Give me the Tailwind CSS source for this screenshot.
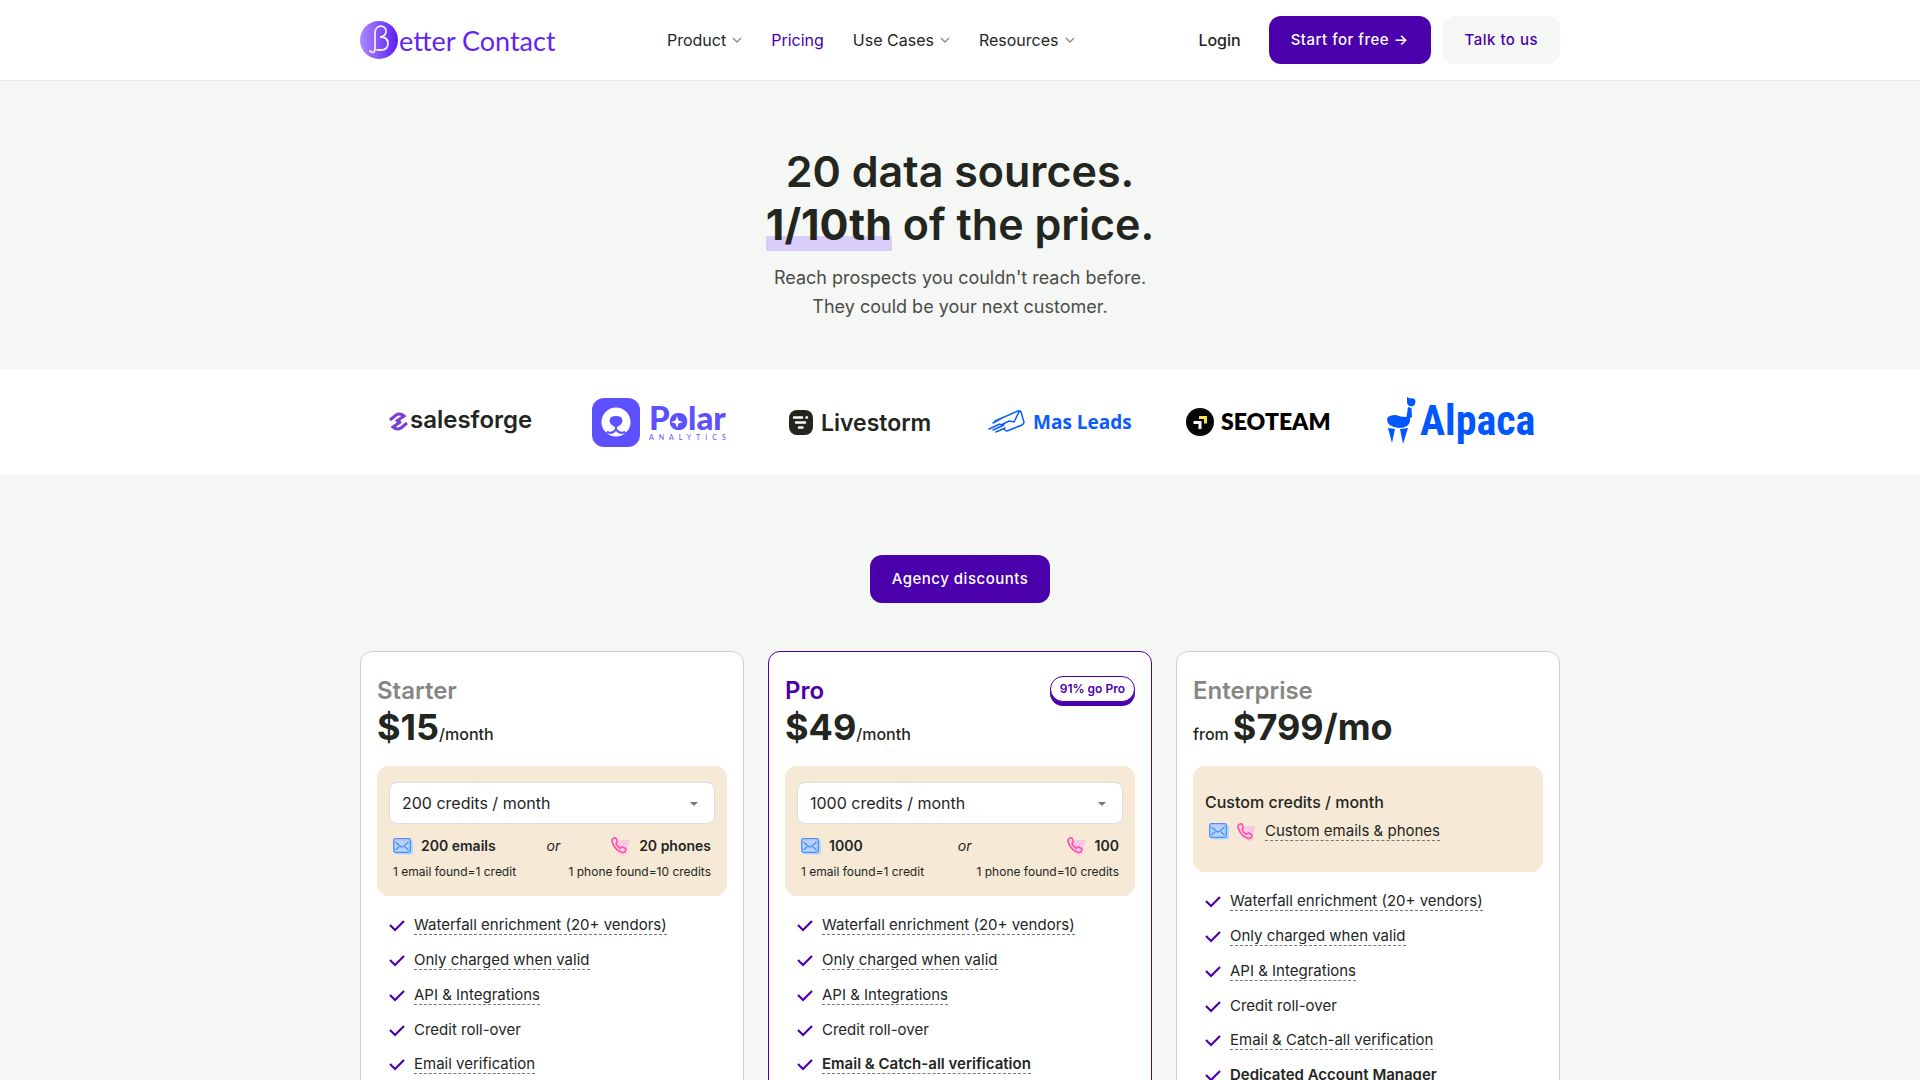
<!DOCTYPE html>
<html lang="en">
<head>
  <meta charset="UTF-8">
  <meta name="viewport" content="width=device-width, initial-scale=1.0">
  <title>Pricing | Better Contact</title>
  <script src="https://cdn.jsdelivr.net/npm/@tailwindcss/browser@4"></script>
</head>
<body class="bg-[#f5f7f4] font-['Inter',sans-serif] text-base text-[#22261f] antialiased">
  <!-- Shared icons -->
  <svg class="hidden" aria-hidden="true">
    <symbol id="chevron" viewBox="0 0 10 6">
      <path d="M1 1l4 4 4-4" fill="none" stroke="#8b8d89" stroke-width="1.4"/>
    </symbol>
    <symbol id="check" viewBox="0 0 16 12">
      <path d="M1 5l5 5 9-9" fill="none" stroke="#4a00ab" stroke-width="2.2"/>
    </symbol>
    <symbol id="mail" viewBox="0 0 20 17">
      <rect x="2" y="2" width="18" height="14.5" rx="2" fill="#b3d4fb"/>
      <rect x=".7" y=".7" width="16.6" height="13.6" rx="1.5" fill="#b3d4fb" stroke="#4e8cf7" stroke-width="1.3"/>
      <path d="M2.5 2.2h13" stroke="#d5b8f0" stroke-width="1"/>
      <path d="M2.5 4l5.2 4.4q1.3 1 2.6 0L15.5 4M2.5 12l3.7-3.3M15.5 12l-3.7-3.3" fill="none" stroke="#4e8cf7" stroke-width="1.3"/>
    </symbol>
    <symbol id="phone" viewBox="0 0 20 18">
      <path d="M8 3l10 0v4l-3 5 2 3-2 3h-4l-6-4z" fill="#f9c6e3"/>
      <path d="M2 1.500l1.500-.7q1.300-.2 1.800 1l1 2.400q.3 1-.4 1.700l-.9.900q1.300 3.100 4.300 4.400l1.100-.9q.8-.6 1.700-.1l2.200 1.300q1.100.8.4 1.900l-1.200 1.500q-.8.800-2.200.500Q3.300 13 1 4.300.700 2.300 2 1.500z" fill="#f9d3e3" stroke="#ff4fab" stroke-width="1.6"/>
    </symbol>
  </svg>

  <!-- Header -->
  <header class="border-b border-[#e9ebe8] bg-white">
    <div class="mx-auto flex h-20 max-w-[1200px] items-center">
      <a href="#" aria-label="Better Contact home">
        <svg class="h-10 w-[195px]" viewBox="0 0 195 40">
          <defs>
            <linearGradient id="brand">
              <stop offset="0" stop-color="#ab8cff"/>
              <stop offset="1" stop-color="#5c1cf5"/>
            </linearGradient>
          </defs>
          <circle cx="19" cy="20" r="19" fill="url(#brand)"/>
          <path d="M10 31q5 4 5-3V13c0-9 12-9 11-1q-1 5-6 5 8 0 8 6 0 7-7 7h-4M26 19l2 3" fill="none" stroke="#f3ecff" stroke-width="1.8" stroke-linecap="round"/>
          <text x="39" y="31" class="fill-[#6226f4] font-['Lato',sans-serif] text-[27px]">etter Contact</text>
        </svg>
      </a>
      <nav class="ml-28 flex items-center gap-[29px]">
        <a href="#" class="flex items-center gap-1.5">Product <svg class="h-1.5 w-2.5"><use href="#chevron"/></svg></a>
        <a href="#" class="text-[#4a00ab]">Pricing</a>
        <a href="#" class="flex items-center gap-1.5">Use Cases <svg class="h-1.5 w-2.5"><use href="#chevron"/></svg></a>
        <a href="#" class="flex items-center gap-1.5">Resources <svg class="h-1.5 w-2.5"><use href="#chevron"/></svg></a>
      </nav>
      <div class="ml-auto flex items-center gap-3">
        <a href="#" class="mr-4 font-medium">Login</a>
        <button class="h-12 rounded-xl bg-[#4a00ab] px-[22px] text-[15px] font-medium tracking-[0.5px] text-white">Start for free →</button>
        <button class="h-12 rounded-xl bg-[#f5f7f4] px-[22px] text-[15px] font-medium tracking-[0.5px] text-[#4a00ab]">Talk to us</button>
      </div>
    </div>
  </header>

  <main>
    <!-- Hero -->
    <section class="pt-16 pb-12 text-center">
      <h1 class="text-[43px] leading-[53px] font-semibold">20 data sources.<br><span class="inline-block bg-linear-to-t from-[#d9cdfb] from-[15px] to-transparent to-[15px] font-bold">1/10th</span> of the price.</h1>
      <p class="mt-3 text-lg leading-[29px] text-[#4a4d48]">Reach prospects you couldn't reach before.<br>They could be your next customer.</p>
    </section>

    <!-- Customer logos -->
    <section class="bg-white py-7">
      <div class="mx-auto grid max-w-[1200px] grid-cols-6 justify-items-center">
        <svg class="h-[50px] w-36" viewBox="0 0 144 50">
          <path d="M2 23l6-5q4-2.500 8 1l-8 5.500M19 26l-6 5q-4 2.500-8-1l8-5.500" fill="none" stroke="#7a3fd0" stroke-width="3"/>
          <text x="22" y="31" class="fill-[#22261f] font-['Inter',sans-serif] text-2xl font-semibold">salesforge</text>
        </svg>
        <svg class="h-[50px] w-36" viewBox="0 0 144 50">
          <rect x="4" y="1" width="48" height="49" rx="12" fill="#5c50ff"/>
          <circle cx="28" cy="25" r="14.5" fill="#fff"/>
          <path d="M21.500 24q0-5 6.500-5t6.500 5q-1 4-5.500 6v2q3 4 7.500 2l2.500 2-6 1q-3 0-5-3-2 3-5 3l-6-1 2.500-2q4.500 2 7.500-2v-2q-4.500-2-5.500-6z" fill="#5c50ff"/>
          <text x="61" y="33" class="fill-[#5c50ff] font-['Lato',sans-serif] text-[33px] font-black">Polar</text>
          <circle cx="89" cy="25" r="7" fill="#5c50ff"/>
          <path d="M89 19l1.500 4.500L95 25l-4.500 1.500L89 31l-1.500-4.500L83 25l4.500-1.500z" fill="#fff"/>
          <text x="61" y="43" class="fill-[#5c50ff] font-['Lato',sans-serif] text-[7px] tracking-[5px]">ANALYTICS</text>
        </svg>
        <svg class="h-[50px] w-36" viewBox="0 0 144 50">
          <rect x="1" y="13" width="24" height="25" rx="8" fill="#22261f"/>
          <path d="M6 20.500h8M18.500 20.500h.5M8 25.500h9M11 30.500h3.500" stroke="#fff" stroke-width="2.5" stroke-linecap="round"/>
          <text x="33" y="34" class="fill-[#22261f] font-['Inter',sans-serif] text-[23px] font-semibold">Livestorm</text>
        </svg>
        <svg class="h-[50px] w-36" viewBox="0 0 144 50">
          <path d="M7 24L30 14q2-.5 3 1l3 10q0 2-2 3l-15 6q-2 0-3-2M31 15l-5 10-5-1-8 4M14 21l-9 5M12 27L1 32M16 28L5 33M17 31l-9 4" fill="none" stroke="#0a5cff" stroke-width="1.5" stroke-linecap="round"/>
          <text x="45" y="32" class="fill-[#0a5cff] font-['Open_Sans',sans-serif] text-[19px] font-bold">Mas Leads</text>
        </svg>
        <svg class="h-[50px] w-[148px]" viewBox="0 0 148 50">
          <circle cx="14" cy="25" r="14" fill="#050505"/>
          <path d="M13 20.500h6.500v6" fill="none" stroke="#f4e54a" stroke-width="3"/>
          <path d="M7.500 25.500h6.500v6.500" fill="none" stroke="#fff" stroke-width="3"/>
          <text x="35" y="33" class="fill-black font-['Lato',sans-serif] text-[23px] font-extrabold">SEOTEAM</text>
        </svg>
        <svg class="h-[50px] w-[148px]" viewBox="0 0 148 50">
          <g fill="#0057ff">
            <path d="M21 0l3 1.500q5-1 5.500 3-.5 5-4.500 5-4-1-4-4.500zM22 10l3.500 1 .5 9q-3 2-5.500 0z"/>
            <path d="M1 22q1-4 9-4 4 2 10 2 5-1 4 4-1 7-11 7Q1 30 1 22zM2 31l7 1-3 14zM14 32l8-1-5 16z"/>
          </g>
          <text x="34" y="38" class="fill-[#0057ff] font-['Liberation_Sans_Narrow','Roboto_Condensed',sans-serif] text-[42px] font-bold">Alpaca</text>
        </svg>
      </div>
    </section>

    <!-- Plans -->
    <section class="pt-20">
      <div class="text-center">
        <button class="h-12 rounded-xl bg-[#4a00ab] px-[22px] text-[15px] font-medium tracking-[0.5px] text-white">Agency discounts</button>
      </div>

      <div class="mx-auto mt-12 grid max-w-[1200px] grid-cols-3 gap-6">
        <article class="rounded-xl border border-[#cfd1ce] bg-white px-4 py-6">
          <h2 class="text-2xl leading-[29px] font-semibold text-[#858783]">Starter</h2>
          <p class="flex items-end leading-8 font-medium"><span class="text-4xl leading-[45px] font-bold">$15</span>/month</p>
          <div class="mt-4 rounded-xl bg-[#f6e9d6] px-3 py-4">
            <div class="relative">
              <select aria-label="Starter credits" class="h-[42px] w-full appearance-none rounded-lg border border-[#dcdedf] bg-white px-3">
                <option>200 credits / month</option>
              </select>
              <svg class="pointer-events-none absolute top-5 right-[17px] h-1 w-2" viewBox="0 0 8 4"><path d="M0 0h8L4 4z" fill="#777"/></svg>
            </div>
            <div class="mt-3 flex items-center justify-between px-1 text-sm font-semibold">
              <span class="flex items-center gap-2"><svg class="h-[17px] w-5"><use href="#mail"/></svg>200 emails</span>
              <em class="font-normal">or</em>
              <span class="flex items-center gap-2"><svg class="h-[18px] w-5"><use href="#phone"/></svg>20 phones</span>
            </div>
            <div class="mt-2 flex justify-between px-1 text-xs">
              <span>1 email found=1 credit</span>
              <span>1 phone found=10 credits</span>
            </div>
          </div>
          <ul class="mt-5 flex flex-col gap-4 px-3 text-[15px] leading-[18px]">
            <li class="flex gap-[9px]"><svg class="mt-1 h-3 w-4 shrink-0"><use href="#check"/></svg><span class="border-b border-dashed border-[#777]">Waterfall enrichment (20+ vendors)</span></li>
            <li class="flex gap-[9px]"><svg class="mt-1 h-3 w-4 shrink-0"><use href="#check"/></svg><span class="border-b border-dashed border-[#777]">Only charged when valid</span></li>
            <li class="flex gap-[9px]"><svg class="mt-1 h-3 w-4 shrink-0"><use href="#check"/></svg><span class="border-b border-dashed border-[#777]">API &amp; Integrations</span></li>
            <li class="flex gap-[9px]"><svg class="mt-1 h-3 w-4 shrink-0"><use href="#check"/></svg><span>Credit roll-over</span></li>
            <li class="flex gap-[9px]"><svg class="mt-1 h-3 w-4 shrink-0"><use href="#check"/></svg><span class="border-b border-dashed border-[#777]">Email verification</span></li>
          </ul>
        </article>

        <article class="rounded-xl border border-[#4a00ab] bg-white px-4 py-6">
          <div class="flex h-[29px] items-start justify-between">
            <h2 class="text-2xl leading-[29px] font-semibold text-[#4a00ab]">Pro</h2>
            <span class="rounded-full border border-[#4a00ab] bg-white px-[9px] text-xs leading-6 font-semibold text-[#4a00ab] shadow-[0_4px_0_#4a00ab]">91% go Pro</span>
          </div>
          <p class="flex items-end leading-8 font-medium"><span class="text-4xl leading-[45px] font-bold">$49</span>/month</p>
          <div class="mt-4 rounded-xl bg-[#f6e9d6] px-3 py-4">
            <div class="relative">
              <select aria-label="Pro credits" class="h-[42px] w-full appearance-none rounded-lg border border-[#dcdedf] bg-white px-3">
                <option>1000 credits / month</option>
              </select>
              <svg class="pointer-events-none absolute top-5 right-[17px] h-1 w-2" viewBox="0 0 8 4"><path d="M0 0h8L4 4z" fill="#777"/></svg>
            </div>
            <div class="mt-3 flex items-center justify-between px-1 text-sm font-semibold">
              <span class="flex items-center gap-2"><svg class="h-[17px] w-5"><use href="#mail"/></svg>1000</span>
              <em class="font-normal">or</em>
              <span class="flex items-center gap-2"><svg class="h-[18px] w-5"><use href="#phone"/></svg>100</span>
            </div>
            <div class="mt-2 flex justify-between px-1 text-xs">
              <span>1 email found=1 credit</span>
              <span>1 phone found=10 credits</span>
            </div>
          </div>
          <ul class="mt-5 flex flex-col gap-4 px-3 text-[15px] leading-[18px]">
            <li class="flex gap-[9px]"><svg class="mt-1 h-3 w-4 shrink-0"><use href="#check"/></svg><span class="border-b border-dashed border-[#777]">Waterfall enrichment (20+ vendors)</span></li>
            <li class="flex gap-[9px]"><svg class="mt-1 h-3 w-4 shrink-0"><use href="#check"/></svg><span class="border-b border-dashed border-[#777]">Only charged when valid</span></li>
            <li class="flex gap-[9px]"><svg class="mt-1 h-3 w-4 shrink-0"><use href="#check"/></svg><span class="border-b border-dashed border-[#777]">API &amp; Integrations</span></li>
            <li class="flex gap-[9px]"><svg class="mt-1 h-3 w-4 shrink-0"><use href="#check"/></svg><span>Credit roll-over</span></li>
            <li class="flex gap-[9px]"><svg class="mt-1 h-3 w-4 shrink-0"><use href="#check"/></svg><span class="border-b border-dashed border-[#777] font-semibold">Email &amp; Catch-all verification</span></li>
          </ul>
        </article>

        <article class="rounded-xl border border-[#cfd1ce] bg-white px-4 py-6">
          <h2 class="text-2xl leading-[29px] font-semibold text-[#858783]">Enterprise</h2>
          <p class="flex items-end gap-1 leading-8 font-medium">from <span class="text-4xl leading-[45px] font-bold">$799/mo</span></p>
          <div class="mt-4 rounded-xl bg-[#f6e9d6] px-3 pt-6 pb-[31px]">
            <p class="font-medium">Custom credits / month</p>
            <div class="mt-2 flex items-center gap-2 px-1 text-[15px] leading-[18px]">
              <svg class="h-[17px] w-5"><use href="#mail"/></svg>
              <svg class="h-[18px] w-5"><use href="#phone"/></svg>
              <span class="border-b border-dashed border-[#777]">Custom emails &amp; phones</span>
            </div>
          </div>
          <ul class="mt-5 flex flex-col gap-4 px-3 text-[15px] leading-[18px]">
            <li class="flex gap-[9px]"><svg class="mt-1 h-3 w-4 shrink-0"><use href="#check"/></svg><span class="border-b border-dashed border-[#777]">Waterfall enrichment (20+ vendors)</span></li>
            <li class="flex gap-[9px]"><svg class="mt-1 h-3 w-4 shrink-0"><use href="#check"/></svg><span class="border-b border-dashed border-[#777]">Only charged when valid</span></li>
            <li class="flex gap-[9px]"><svg class="mt-1 h-3 w-4 shrink-0"><use href="#check"/></svg><span class="border-b border-dashed border-[#777]">API &amp; Integrations</span></li>
            <li class="flex gap-[9px]"><svg class="mt-1 h-3 w-4 shrink-0"><use href="#check"/></svg><span>Credit roll-over</span></li>
            <li class="flex gap-[9px]"><svg class="mt-1 h-3 w-4 shrink-0"><use href="#check"/></svg><span class="border-b border-dashed border-[#777]">Email &amp; Catch-all verification</span></li>
            <li class="flex gap-[9px]"><svg class="mt-1 h-3 w-4 shrink-0"><use href="#check"/></svg><span class="font-semibold">Dedicated Account Manager</span></li>
          </ul>
        </article>
      </div>
    </section>
  </main>
</body>
</html>
